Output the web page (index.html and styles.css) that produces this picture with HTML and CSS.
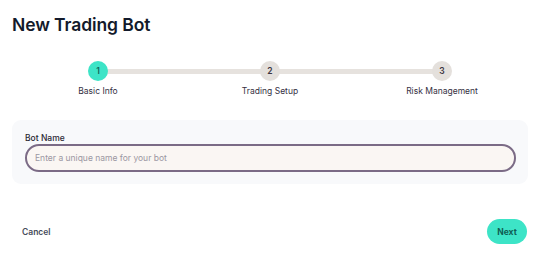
FILE: index.html
```html
<!DOCTYPE html>
<html>
<head>
<meta charset="utf-8">
<link rel="stylesheet" href="styles.css">
</head>
<body>
<div class="page">
  <h1 class="title">New Trading Bot</h1>
  <div class="stepper">
    <div class="track"></div>
    <div class="step active"><span class="dot">1</span><span class="label">Basic Info</span></div>
    <div class="step"><span class="dot">2</span><span class="label">Trading Setup</span></div>
    <div class="step"><span class="dot">3</span><span class="label">Risk Management</span></div>
  </div>
  <div class="card">
    <label class="field-label" for="botname">Bot Name</label>
    <input id="botname" class="field-input" type="text" placeholder="Enter a unique name for your bot" autofocus>
  </div>
  <div class="footer">
    <button class="btn-cancel">Cancel</button>
    <button class="btn-next">Next</button>
  </div>
</div>
</body>
</html>
```
FILE: styles.css
```css
* { box-sizing: border-box; }
html, body { margin: 0; background: #ffffff; }
body { font-family: Inter, "Noto Sans", sans-serif; color: #111827; }
.page { width: 540px; height: 255px; padding: 14px 12px 0 12px; }
.title { margin: 0; font-size: 17.5px; line-height: 22px; font-weight: 600; color: #131a2b; letter-spacing: -0.1px; }
.stepper { position: relative; display: grid; grid-template-columns: repeat(3, 1fr); margin-top: 25px; }
.track { position: absolute; left: 86px; right: 86px; top: 8px; height: 5px; background: #e6e2de; border-radius: 3px; }
.step { position: relative; display: flex; flex-direction: column; align-items: center; }
.dot { width: 20px; height: 20px; border-radius: 50%; background: #e4e0dc; color: #3b3540; font-size: 8.5px; font-weight: 600; display: flex; align-items: center; justify-content: center; }
.step.active .dot { background: #3de4c7; color: #11675b; }
.label { margin-top: 4px; font-size: 8.5px; line-height: 12px; color: #35303f; }
.card { margin-top: 23px; background: #f8f9fb; border-radius: 9px; padding: 13px 12px 12px 13px; display: flex; flex-direction: column; }
.field-label { font-size: 8.5px; line-height: 11px; font-weight: 500; color: #2a2833; }
.field-input { width: 491px; height: 28px; border: 2.5px solid #7b6b86; border-radius: 14px; background: #faf6f3; padding: 0 8px; font-family: inherit; font-size: 8.5px; color: #2a2833; outline: none; caret-color: #3a2f4a; }
.field-input::placeholder { color: #9b96a2; }
.footer { margin-top: 35px; display: flex; justify-content: space-between; align-items: center; }
.btn-cancel { border: none; background: transparent; font-family: inherit; font-size: 8.5px; font-weight: 600; color: #454b5a; padding: 6px 10px; }
.btn-next { border: none; background: #3de4c7; color: #0f5d53; font-family: inherit; font-size: 8.5px; font-weight: 700; height: 25px; width: 40px; border-radius: 13px; padding: 0; margin-right: 1px; }
```
